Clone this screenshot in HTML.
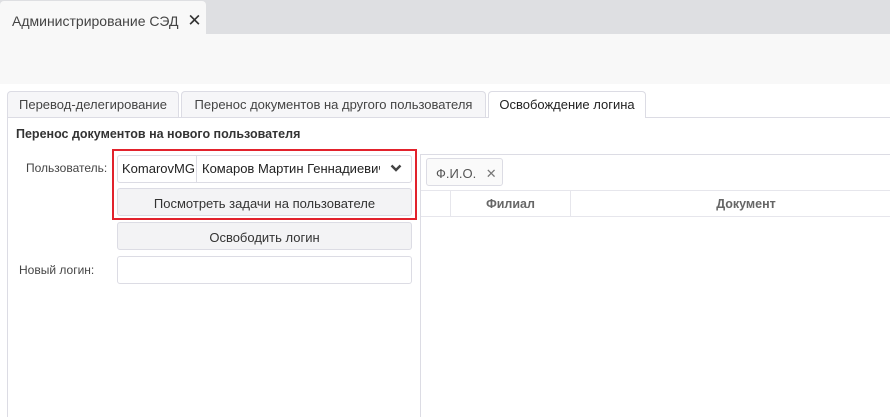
<!DOCTYPE html>
<html><head><meta charset="utf-8"><style>
*{box-sizing:border-box;margin:0;padding:0}
body{width:890px;height:417px;overflow:hidden;background:#fff;font-family:"Liberation Sans","DejaVu Sans",sans-serif;color:#333;position:relative}
.a{position:absolute}
.top{left:0;top:0;width:890px;height:34px;background:#dedfe2}
.doc{left:0;top:1px;width:206px;height:34px;background:#f8f8f8;border-radius:4px 4px 0 0;font-size:14px;color:#444;padding:10px 0 0 12px}
.band{left:0;top:34px;width:890px;height:50px;background:#f8f8f8}
.tab{top:91px;height:26px;border:1px solid #dcdce4;border-bottom:none;border-radius:4px 4px 0 0;background:#f6f6f8;font-size:13px;color:#444;text-align:center;padding-top:5px}
.btn{border:1px solid #dcdce4;border-radius:3px;background:#f3f3f5;font-size:13px;color:#333;text-align:center}
.inp{border:1px solid #dcdce4;border-radius:3px;background:#fff}
</style></head><body>
<div class="a top"></div>
<div class="a doc">Администрирование СЭД <span style="font-weight:bold;font-size:17px;margin-left:5px;color:#333">✕</span></div>
<div class="a band"></div>
<div class="a tab" style="left:7px;width:172px">Перевод-делегирование</div>
<div class="a tab" style="left:181px;width:305px">Перенос документов на другого пользователя</div>
<div class="a" style="left:7px;top:117px;width:883px;height:1px;background:#dcdce4"></div>
<div class="a tab" style="left:488px;width:158px;height:27px;background:#fff;color:#222">Освобождение логина</div>
<div class="a" style="left:7px;top:117px;width:1px;height:300px;background:#dcdce4"></div>
<div class="a" style="left:420px;top:154px;width:1px;height:263px;background:#dcdce4"></div>
<div class="a" style="left:420px;top:154px;width:470px;height:1px;background:#dcdce4"></div>
<div class="a" style="left:16px;top:127px;font-size:12.5px;font-weight:bold;color:#333">Перенос документов на нового пользователя</div>
<div class="a" style="left:26px;top:161px;font-size:12px;color:#444">Пользователь:</div>
<div class="a inp" style="left:117px;top:155px;width:295px;height:28px"></div>
<div class="a" style="left:196px;top:156px;width:1px;height:26px;background:#dcdce4"></div>
<div class="a" style="left:122px;top:161px;width:72px;overflow:hidden;white-space:nowrap;font-size:13px;color:#222">KomarovMG</div>
<div class="a" style="left:202px;top:161px;width:178px;overflow:hidden;white-space:nowrap;font-size:13px;color:#222">Комаров Мартин Геннадиевич</div>
<svg class="a" style="left:390px;top:164px" width="12" height="9"><path d="M1.5 1.5 L6 6 L10.5 1.5" stroke="#444" stroke-width="2.4" fill="none"/></svg>
<div class="a btn" style="left:117px;top:188px;width:295px;height:28px;padding-top:7px">Посмотреть задачи на пользователе</div>
<div class="a" style="left:112px;top:149px;width:305px;height:71px;border:2px solid #e2222c"></div>
<div class="a btn" style="left:117px;top:222px;width:295px;height:28px;padding-top:7px">Освободить логин</div>
<div class="a" style="left:19px;top:263px;font-size:12px;color:#444">Новый логин:</div>
<div class="a inp" style="left:117px;top:256px;width:295px;height:28px"></div>
<div class="a" style="left:426px;top:158px;width:77px;height:28px;border:1px solid #dcdce4;border-radius:3px;background:#fafafa;font-size:13px;color:#555;padding:7px 0 0 9px">Ф.И.О. <span style="color:#777;font-weight:bold;margin-left:6px">✕</span></div>
<div class="a" style="left:421px;top:190px;width:469px;height:1px;background:#e6e6ec"></div>
<div class="a" style="left:421px;top:216px;width:469px;height:1px;background:#e6e6ec"></div>
<div class="a" style="left:450px;top:191px;width:1px;height:25px;background:#e6e6ec"></div>
<div class="a" style="left:570px;top:191px;width:1px;height:25px;background:#e6e6ec"></div>
<div class="a" style="left:451px;top:197px;width:119px;text-align:center;font-size:12.5px;color:#666;font-weight:bold">Филиал</div>
<div class="a" style="left:571px;top:197px;width:350px;text-align:center;font-size:12.5px;color:#666;font-weight:bold">Документ</div>
</body></html>
